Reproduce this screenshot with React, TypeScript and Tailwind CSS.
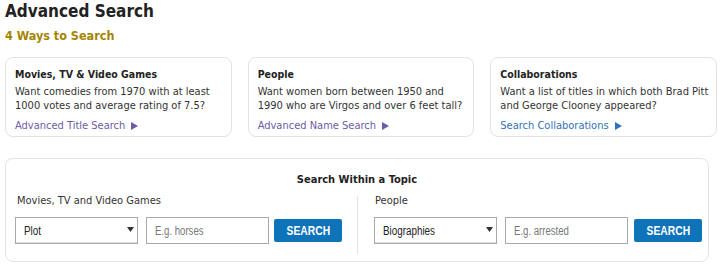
import React from 'react';

const cards = [
  {
    title: 'Movies, TV & Video Games',
    lines: ['Want comedies from 1970 with at least', '1000 votes and average rating of 7.5?'],
    link: 'Advanced Title Search',
    visited: true,
  },
  {
    title: 'People',
    lines: ['Want women born between 1950 and', '1990 who are Virgos and over 6 feet tall?'],
    link: 'Advanced Name Search',
    visited: true,
  },
  {
    title: 'Collaborations',
    lines: ['Want a list of titles in which both Brad Pitt', 'and George Clooney appeared?'],
    link: 'Search Collaborations',
    visited: false,
  },
];

const Arrow = () => (
  <svg width="7" height="8" viewBox="0 0 7 8" className="inline-block ml-[6px] fill-current">
    <path d="M0 0 L7 4 L0 8 Z" />
  </svg>
);

// form controls in the shot use a narrow Arial; squeeze Liberation Sans to match
const SearchRow = ({ option, placeholder, gap }: { option: string; placeholder: string; gap: string }) => (
  <div className="flex items-center font-['Liberation_Sans',Arial,sans-serif] text-[12px]">
    <div className="relative w-[123px] h-[27px] border border-[#a9a9a9] bg-white flex items-center pl-[8px] text-[#222] shadow-[inset_0_-1px_0_#ddd]">
      <span className="inline-block origin-left scale-x-[0.82]">{option}</span>
      <svg width="7" height="5" viewBox="0 0 7 5" className="absolute right-[3px] top-[9px] fill-[#333]">
        <path d="M0 0 H7 L3.5 5 Z" />
      </svg>
    </div>
    <div className="w-[123px] h-[27px] ml-[8px] border border-[#a9a9a9] bg-white flex items-center pl-[8px] text-[#777]">
      <span className="inline-block origin-left scale-x-[0.8]">{placeholder}</span>
    </div>
    <button className={`${gap} w-[68px] h-[23px] bg-[#0f73ba] rounded-[2px] text-white font-bold text-[12px] flex items-center justify-center`}>
      <span className="inline-block scale-x-[0.86]">SEARCH</span>
    </button>
  </div>
);

export default function App() {
  return (
    <div className="w-[723px] h-[269px] bg-white px-[5px] overflow-hidden text-[#333] font-['DejaVu_Sans_Condensed','DejaVu_Sans',sans-serif]">
      <h1 className="text-[17px] leading-[22px] font-bold text-[#222]">Advanced Search</h1>
      <h2 className="text-[12.5px] leading-[16px] font-bold text-[#a58500] mt-[6px]">4 Ways to Search</h2>

      <div className="grid grid-cols-3 gap-[16px] mt-[13px] w-[712px]">
        {cards.map(c => (
          <div key={c.title} className="h-[80px] border border-[#e3e3e3] rounded-[8px] pt-[8px] pl-[9px]">
            <div className="text-[10.5px] leading-[16px] font-bold text-[#222]">{c.title}</div>
            <div className="mt-[3px] text-[11px] leading-[14px] text-[#333]">
              {c.lines.map(l => (
                <div key={l}>{l}</div>
              ))}
            </div>
            <div
              className={`mt-[6px] text-[11px] leading-[14px] flex items-center ${
                c.visited ? 'text-[#6e5aa6]' : 'text-[#2f72b8]'
              }`}
            >
              {c.link}
              <Arrow />
            </div>
          </div>
        ))}
      </div>

      <div className="mt-[21px] w-[704px] h-[104px] border border-[#e3e3e3] rounded-[8px] pt-[13px]">
        <div className="text-center text-[11px] leading-[16px] font-bold text-[#222]">Search Within a Topic</div>
        <div className="flex mt-[5px]">
          <div className="w-[351px] pl-[9px] pb-[10px]">
            <div className="text-[11px] leading-[16px] text-[#333] pl-[2px]">Movies, TV and Video Games</div>
            <div className="mt-[8px]">
              <SearchRow option="Plot" placeholder="E.g. horses" gap="ml-[5px]" />
            </div>
          </div>
          <div className="flex-1 border-l border-[#e3e3e3] pl-[16px] mt-[3px] pb-[7px]">
            <div className="text-[11px] leading-[16px] text-[#333] -mt-[3px] pl-[1px]">People</div>
            <div className="mt-[8px]">
              <SearchRow option="Biographies" placeholder="E.g. arrested" gap="ml-[6px]" />
            </div>
          </div>
        </div>
      </div>
    </div>
  );
}
